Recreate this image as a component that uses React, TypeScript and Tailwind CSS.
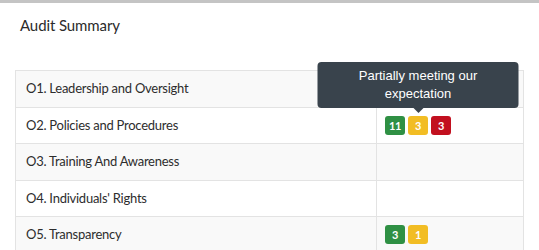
import React from 'react';

type Tone = 'green' | 'yellow' | 'red';

interface Row {
  label: string;
  badges: { tone: Tone; count: number; tip?: string }[];
}

const rows: Row[] = [
  { label: 'O1. Leadership and Oversight', badges: [] },
  {
    label: 'O2. Policies and Procedures',
    badges: [
      { tone: 'green', count: 11 },
      { tone: 'yellow', count: 3, tip: 'Partially meeting our expectation' },
      { tone: 'red', count: 3 },
    ],
  },
  { label: 'O3. Training And Awareness', badges: [] },
  { label: "O4. Individuals' Rights", badges: [] },
  {
    label: 'O5. Transparency',
    badges: [
      { tone: 'green', count: 3 },
      { tone: 'yellow', count: 1 },
    ],
  },
];

const toneClass: Record<Tone, string> = {
  green: 'bg-[#2f9044]',
  yellow: 'bg-[#f2bd24]',
  red: 'bg-[#c2101f]',
};

const Badge: React.FC<{ tone: Tone; count: number; tip?: string }> = ({ tone, count, tip }) => (
  <span
    className={`relative flex h-[19px] w-[20px] items-center justify-center rounded-[3px] text-[11px] font-bold leading-none tracking-[-0.3px] text-white ${toneClass[tone]}`}
  >
    {count}
    {tip && (
      // open tooltip sitting above the badge
      <span className="absolute bottom-full left-1/2 mb-[8px] w-[201px] -translate-x-1/2 rounded-[4px] bg-[#39434c] px-3 py-[5px] text-center font-['Liberation_Sans',Arial,sans-serif] text-[13px] font-normal leading-[18px] tracking-normal text-white">
        {tip}
        <span className="absolute left-1/2 top-full -translate-x-1/2 border-x-[5px] border-t-[5px] border-x-transparent border-t-[#39434c]" />
      </span>
    )}
  </span>
);

export default function App() {
  return (
    <div className="h-[250px] w-[539px] overflow-hidden bg-white font-['Lato','Noto_Sans',sans-serif] text-[#333]">
      <div className="h-[3px] bg-[#c4c4c4]" />
      <h2 className="px-[20px] pt-[12px] text-[15px] leading-[20px] tracking-[-0.1px] text-[#2b2b2b]">Audit Summary</h2>

      <div className="mx-[15px] mt-[35px] border-x border-[#e3e3e3]">
        {rows.map((row, i) => (
          <div
            key={row.label}
            className={`grid h-[36.5px] grid-cols-[361px_1fr] border-t border-[#e3e3e3] ${i % 2 === 0 ? 'bg-[#f9f9f9]' : 'bg-white'}`}
          >
            <div className="flex items-center border-r border-[#e3e3e3] px-[10px] text-[13px] tracking-[-0.25px] text-[#2d2d2d]">
              {row.label}
            </div>
            <div className="flex items-center gap-[3px] px-[8px]">
              {row.badges.map((b, j) => (
                <Badge key={j} {...b} />
              ))}
            </div>
          </div>
        ))}
      </div>
    </div>
  );
}
